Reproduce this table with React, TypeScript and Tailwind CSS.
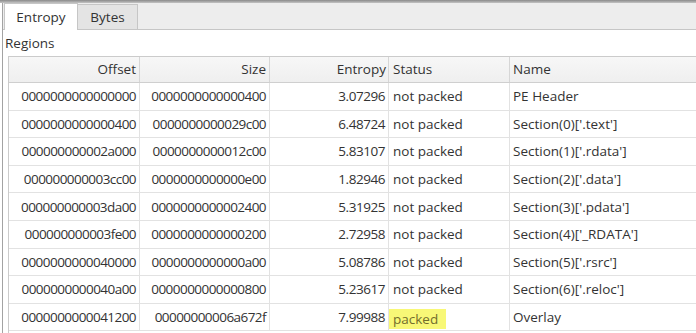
import React from 'react'

type Region = {
    offset: string
    size: string
    entropy: string
    status: string
    name: string
}

const regions: Region[] = [
    { offset: '0000000000000000', size: '0000000000000400', entropy: '3.07296', status: 'not packed', name: 'PE Header' },
    { offset: '0000000000000400', size: '0000000000029c00', entropy: '6.48724', status: 'not packed', name: "Section(0)['.text']" },
    { offset: '000000000002a000', size: '0000000000012c00', entropy: '5.83107', status: 'not packed', name: "Section(1)['.rdata']" },
    { offset: '000000000003cc00', size: '0000000000000e00', entropy: '1.82946', status: 'not packed', name: "Section(2)['.data']" },
    { offset: '000000000003da00', size: '0000000000002400', entropy: '5.31925', status: 'not packed', name: "Section(3)['.pdata']" },
    { offset: '000000000003fe00', size: '0000000000000200', entropy: '2.72958', status: 'not packed', name: "Section(4)['_RDATA']" },
    { offset: '0000000000040000', size: '0000000000000a00', entropy: '5.08786', status: 'not packed', name: "Section(5)['.rsrc']" },
    { offset: '0000000000040a00', size: '0000000000000800', entropy: '5.23617', status: 'not packed', name: "Section(6)['.reloc']" },
    { offset: '0000000000041200', size: '00000000006a672f', entropy: '7.99988', status: 'packed', name: 'Overlay' },
]

export default function App() {
    return (
        <div
            className="w-[696px] h-[333px] overflow-hidden bg-white flex flex-col text-[13.5px] text-[#333333]"
            style={{ fontFamily: '"Open Sans", "Noto Sans", sans-serif' }}
        >
            {/* bord supérieur de la fenêtre */}
            <div className="h-[3px] bg-gradient-to-b from-[#8a8a8a] to-[#c4c4c4]" />

            <div className="flex-1 flex flex-col ml-[2px] border-l border-[#a3a3a3]">
                {/* onglets */}
                <div className="h-[27px] shrink-0 flex items-end bg-[#ededed] border-b border-[#c6c6c6]">
                    <div className="ml-px w-[74px] h-[27px] -mb-px bg-white border border-b-0 border-[#c6c6c6] flex items-center justify-center">
                        Entropy
                    </div>
                    <div className="w-[60px] h-[26px] -mb-px bg-[#e4e4e4] border border-l-0 border-[#c6c6c6] flex items-center justify-center">
                        Bytes
                    </div>
                </div>

                <div className="h-[26px] shrink-0 flex items-center pl-[2px]">Regions</div>

                {/* tableau des régions */}
                <div className="ml-[5px] border-l border-t border-[#cbcbcb] flex-1 flex flex-col">
                    <div className="h-[26px] shrink-0 flex bg-gradient-to-b from-[#f7f7f7] to-[#efefef] border-b border-[#cfcfcf]">
                        <div className="w-[131px] px-[3px] flex items-center justify-end border-r border-[#d6d6d6]">Offset</div>
                        <div className="w-[130px] px-[3px] flex items-center justify-end border-r border-[#d6d6d6]">Size</div>
                        <div className="w-[119px] px-[2px] flex items-center justify-end border-r border-[#d6d6d6]">Entropy</div>
                        <div className="w-[121px] px-[4px] flex items-center border-r border-[#d6d6d6]">Status</div>
                        <div className="flex-1 px-[3px] flex items-center">Name</div>
                    </div>

                    {regions.map((r) => (
                        <div key={r.offset} className="h-[27.6px] shrink-0 flex border-b border-[#e2e2e2]">
                            <div className="w-[131px] px-[3px] flex items-center justify-end border-r border-[#e2e2e2] tracking-[-0.55px]">
                                {r.offset}
                            </div>
                            <div className="w-[130px] px-[3px] flex items-center justify-end border-r border-[#e2e2e2] tracking-[-0.55px]">
                                {r.size}
                            </div>
                            <div className="w-[119px] px-[3px] flex items-center justify-end border-r border-[#e2e2e2] tracking-[-0.45px]">
                                {r.entropy}
                            </div>
                            <div className="w-[121px] px-[4px] flex items-center border-r border-[#e2e2e2]">
                                {r.status === 'packed' ? (
                                    <span className="-ml-[4px] mt-[4px] pl-[4px] pr-[8px] h-[20px] leading-[20px] bg-[#f8f877] text-[#726d2c]">
                                        {r.status}
                                    </span>
                                ) : (
                                    r.status
                                )}
                            </div>
                            <div className="flex-1 px-[3px] flex items-center">{r.name}</div>
                        </div>
                    ))}
                </div>
            </div>
        </div>
    )
}
